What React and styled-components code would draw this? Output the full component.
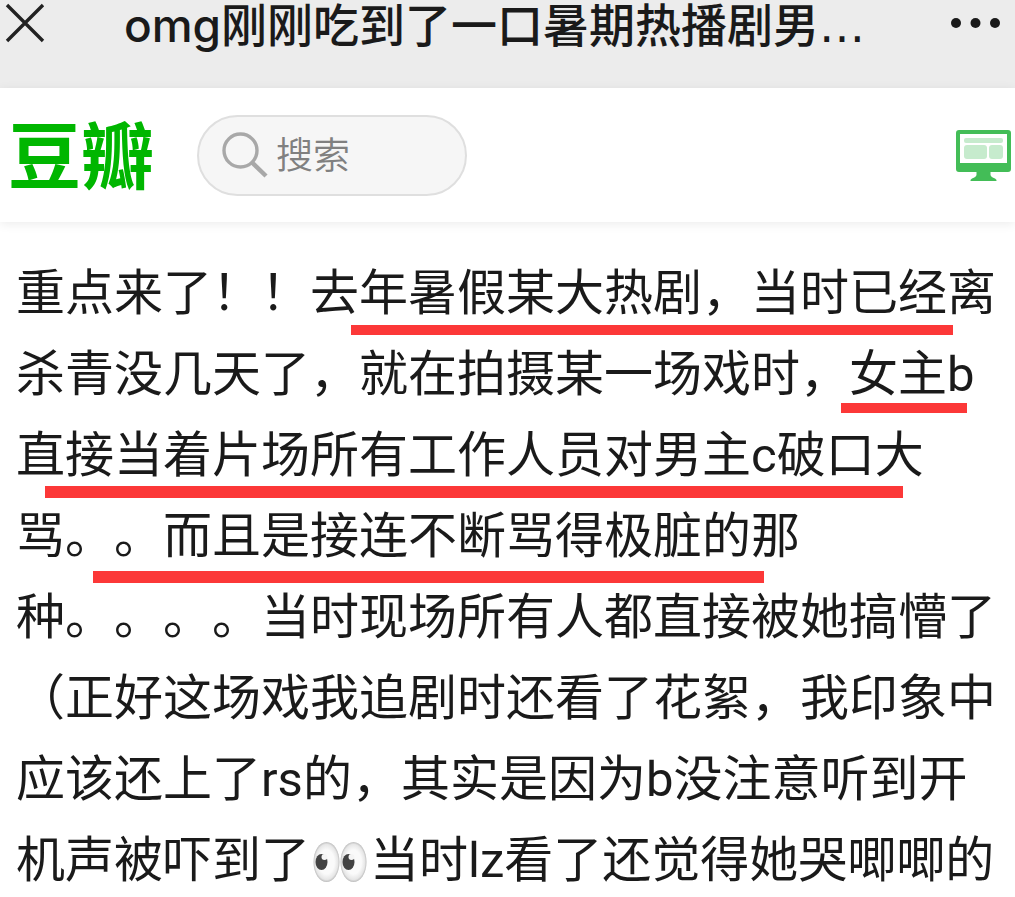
import React from "react";
import styled, { createGlobalStyle } from "styled-components";

const GlobalStyle = createGlobalStyle`
  * { box-sizing: border-box; }
  body {
    margin: 0;
    background: #fff;
    color: #1a1a1a;
    font-family: Roboto, "Noto Sans CJK SC", sans-serif;
    text-spacing-trim: space-all;
  }
`;

const Page = styled.div`
  height: 100vh;
  overflow: hidden;
`;

const IconButton = styled.button`
  display: flex;
  flex: none;
  padding: 0;
  border: 0;
  background: none;
  color: inherit;
`;

const TitleBar = styled.header`
  display: flex;
  align-items: flex-start;
  justify-content: space-between;
  height: 88px;
  padding: 0 10px 0 4px;
  background: #ececec;
`;

const Title = styled.h1`
  margin: 0;
  padding-right: 6px;
  font: 500 46px/50px Inter, "Noto Sans CJK SC", sans-serif;
  white-space: nowrap;
`;

const Ellipsis = styled.span`
  font-family: "DejaVu Sans", sans-serif;
`;

const SiteBar = styled.nav`
  display: flex;
  align-items: center;
  height: 134px;
  padding: 0 4px 0 8px;
  box-shadow: 0 2px 10px rgba(0, 0, 0, 0.08);
`;

const Logo = styled.a`
  padding-bottom: 8px;
  color: #00b600;
  font: 700 73px/80px "Noto Sans CJK SC", sans-serif;
  text-decoration: none;
`;

const SearchBox = styled.label`
  display: flex;
  align-items: center;
  gap: 8px;
  width: 270px;
  height: 81px;
  margin: 0 auto 0 43px;
  padding: 0 24px 0 23px;
  border: 2px solid #dfdfdf;
  border-radius: 41px;
  background: #f6f6f6;
`;

const SearchInput = styled.input`
  flex: 1;
  min-width: 0;
  padding: 0 0 4px;
  border: 0;
  outline: 0;
  background: none;
  font: 350 37px/48px "Noto Sans CJK SC", sans-serif;
  &::placeholder { color: #808080; opacity: 1; }
`;

const Article = styled.article`
  position: relative;
  padding: 31px 16px 0;
`;

const Paragraph = styled.p`
  margin: 0;
  font-size: 49px;
  line-height: 81px;
`;

const Eyes = styled.svg`
  margin: 0 3px;
  vertical-align: -6px;
`;

const Marker = styled.span`
  position: absolute;
  top: ${(p) => p.$top}px;
  left: ${(p) => p.$left}px;
  width: ${(p) => p.$width}px;
  height: ${(p) => p.$height}px;
  background: #fc3838;
`;

const markers = [
  { top: 103, left: 351, width: 602, height: 10 },
  { top: 181, left: 841, width: 126, height: 10 },
  { top: 264, left: 45, width: 858, height: 12 },
  { top: 349, left: 93, width: 671, height: 12 },
];

function EyesEmoji() {
  return (
    <Eyes width="54" height="42" viewBox="0 0 54 42" role="img" aria-label="👀">
      <defs>
        <radialGradient id="eyeball">
          <stop offset="0.6" stopColor="#fafafa" />
          <stop offset="0.88" stopColor="#e6e6e6" />
          <stop offset="1" stopColor="#bdbdbd" />
        </radialGradient>
      </defs>
      {[0, 27].map((x) => (
        <g key={x} transform={`translate(${x} 0)`}>
          <ellipse cx="13.5" cy="21" rx="13" ry="20" fill="url(#eyeball)" />
          <ellipse cx="8.5" cy="21" rx="6" ry="8" fill="#424242" />
          <circle cx="11.5" cy="16" r="3" fill="#f5f5f5" />
        </g>
      ))}
    </Eyes>
  );
}

export default function App() {
  return (
    <>
      <GlobalStyle />
      <Page>
        <TitleBar>
          <IconButton aria-label="关闭">
            <svg width="42" height="46" viewBox="0 0 42 46" fill="none" stroke="#222" strokeWidth="3.4">
              <path d="M3 5 39 41M39 5 3 41" />
            </svg>
          </IconButton>
          <Title>
            omg刚刚吃到了一口暑期热播剧男<Ellipsis>…</Ellipsis>
          </Title>
          <IconButton aria-label="更多">
            <svg width="56" height="46" viewBox="0 0 56 46" fill="#1a1a1a">
              <circle cx="7" cy="23" r="5" />
              <circle cx="26.5" cy="23" r="5" />
              <circle cx="46" cy="23" r="5" />
            </svg>
          </IconButton>
        </TitleBar>
        <SiteBar>
          <Logo href="#">豆瓣</Logo>
          <SearchBox>
            <svg width="46" height="46" viewBox="0 0 46 46" fill="none" stroke="#a8a8a8">
              <circle cx="18.5" cy="18.5" r="16.5" strokeWidth="3.4" />
              <path d="M30 30.5 44 44" strokeWidth="4.5" />
            </svg>
            <SearchInput type="search" placeholder="搜索" aria-label="搜索" />
          </SearchBox>
          <IconButton aria-label="电脑版">
            <svg width="55" height="51" viewBox="0 0 55 51">
              <path
                fill="#43bd57"
                fillRule="evenodd"
                d="M3 0H52Q55 0 55 3V39Q55 42 52 42H34.5V45Q35 47 39 48.5Q41 49.5 40.5 51H14.5Q14 49.5 16 48.5Q20 47 20.5 45V42H3Q0 42 0 39V3Q0 0 3 0ZM4 4V33H51V4Z"
              />
              <g fill="#c6ebcd">
                <rect x="8" y="8" width="39" height="5" rx="2" />
                <rect x="8" y="15" width="23" height="14" rx="3" />
                <rect x="33" y="15" width="14" height="14" rx="3" />
              </g>
            </svg>
          </IconButton>
        </SiteBar>
        <Article lang="zh-CN">
          <Paragraph>
            重点来了！！去年暑假某大热剧，当时已经离杀青没几天了，就在拍摄某一场戏时，女主b直接当着片场所有工作人员对男主c破口大骂。。而且是接连不断骂得极脏的那种。。。。当时现场所有人都直接被她搞懵了（正好这场戏我追剧时还看了花絮，我印象中应该还上了rs的，其实是因为b没注意听到开机声被吓到了<EyesEmoji />当时lz看了还觉得她哭唧唧的
          </Paragraph>
          {markers.map((m) => (
            <Marker key={m.top} $top={m.top} $left={m.left} $width={m.width} $height={m.height} />
          ))}
        </Article>
      </Page>
    </>
  );
}
